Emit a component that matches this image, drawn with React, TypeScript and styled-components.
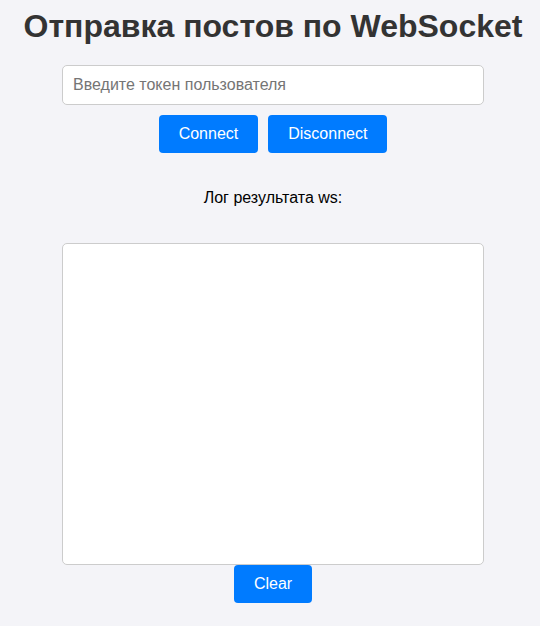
import styled, { createGlobalStyle } from 'styled-components';

const GlobalStyle = createGlobalStyle`
    body {
        margin: 0;
        background: #f4f4f8;
        font-family: "Liberation Sans", Arial, sans-serif;
    }
`;

const Page = styled.div`
    display: flex;
    flex-direction: column;
    align-items: center;
    padding: 0 0 0 6px;
`;

const Title = styled.h1`
    font-size: 32px;
    font-weight: bold;
    color: #333;
    margin: 8px 0 20px;
    line-height: 37px;
`;

const TokenInput = styled.input`
    width: 400px;
    padding: 10px;
    font-size: 16px;
    font-family: inherit;
    border: 1px solid #ccc;
    border-radius: 5px;
    background: #fff;
    outline: none;
    line-height: 18px;
    &::placeholder {
        color: #757575;
    }
`;

const ButtonRow = styled.div`
    display: flex;
    gap: 10px;
    margin-top: 10px;
`;

const Button = styled.button`
    background: #007bff;
    color: #fff;
    border: none;
    border-radius: 4px;
    padding: 10px 20px;
    font-size: 16px;
    font-family: inherit;
    line-height: 18px;
    cursor: pointer;
`;

const LogLabel = styled.p`
    font-size: 16px;
    color: #000;
    margin: 36px 0 0;
    line-height: 18px;
`;

const LogArea = styled.textarea`
    width: 400px;
    height: 300px;
    padding: 10px;
    margin-top: 36px;
    border: 1px solid #ccc;
    border-radius: 5px;
    background: #fff;
    resize: none;
    font-family: inherit;
    display: block;
`;

export default function App() {
    return (
        <>
            <GlobalStyle />
            <Page>
                <Title>Отправка постов по WebSocket</Title>
                <TokenInput placeholder="Введите токен пользователя" />
                <ButtonRow>
                    <Button>Connect</Button>
                    <Button>Disconnect</Button>
                </ButtonRow>
                <LogLabel>Лог результата ws:</LogLabel>
                <LogArea readOnly />
                <Button>Clear</Button>
            </Page>
        </>
    );
}
